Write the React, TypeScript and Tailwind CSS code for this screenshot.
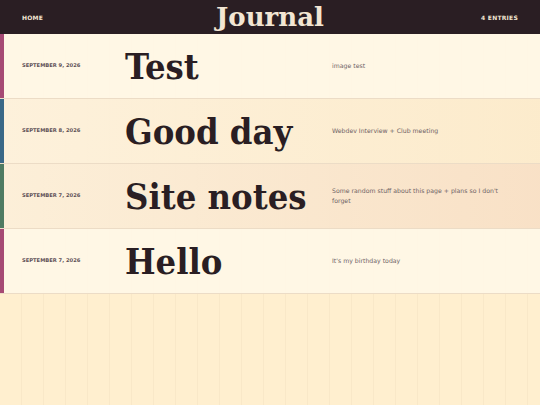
const entries = [
  { date: 'September 9, 2026', title: 'Test', text: 'image test', bar: 'bg-[#a64a74]', bg: 'bg-[#fff7e6]/95' },
  { date: 'September 8, 2026', title: 'Good day', text: 'Webdev Interview + Club meeting', bar: 'bg-[#3a6887]', bg: 'bg-[linear-gradient(90deg,#fdf1dcee,#fcebccee)]' },
  { date: 'September 7, 2026', title: 'Site notes', text: "Some random stuff about this page + plans so I don't forget", bar: 'bg-[#4f7b62]', bg: 'bg-[linear-gradient(90deg,#fcefd9ee,#f8e0c6ee)]' },
  { date: 'September 7, 2026', title: 'Hello', text: "It's my birthday today", bar: 'bg-[#a64a74]', bg: 'bg-[#fff7e6]/95' },
]

export default function App() {
  return (
    <div className="min-h-[405px] bg-[#ffefcf] bg-[repeating-linear-gradient(90deg,transparent_0px,transparent_21px,#f9e8c8_21px,#f9e8c8_22px)] font-['DejaVu_Sans',sans-serif]">
      <header className="h-[34px] bg-[#2a1e23] flex items-center justify-between px-[22px] text-[#f3e6d3]">
        <span className="text-[6px] font-bold tracking-[0.04em] w-[60px]">HOME</span>
        <h1 className="font-['DejaVu_Serif',serif] font-bold text-[26px] leading-none">Journal</h1>
        <span className="text-[6px] font-bold tracking-[0.04em] w-[60px] text-right">4 ENTRIES</span>
      </header>
      <main>
        {entries.map((e, i) => (
          <article key={i} className={`relative h-[65px] border-b border-[#ecdcc6] grid grid-cols-[125px_207px_1fr] items-center ${e.bg}`}>
            <div className={`absolute left-0 top-0 bottom-0 w-[4px] ${e.bar}`} />
            <div className="pl-[22px] text-[5.2px] font-bold text-[#5e5056] uppercase">{e.date}</div>
            <h2 className="font-['DejaVu_Serif_Condensed','DejaVu_Serif',serif] font-bold text-[36px] leading-none text-[#2a1e23] whitespace-nowrap">{e.title}</h2>
            <p className="pr-[30px] text-[6.2px] leading-[10px] text-[#6e6265]">{e.text}</p>
          </article>
        ))}
      </main>
    </div>
  )
}
